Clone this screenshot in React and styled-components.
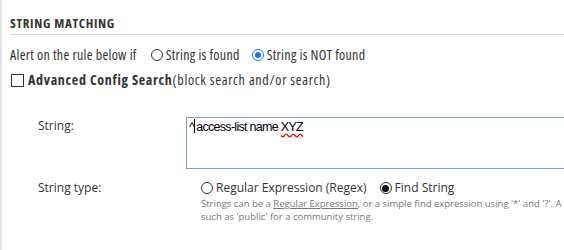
import React from "react";
import styled, { createGlobalStyle } from "styled-components";

const Global = createGlobalStyle`
  html, body {
    margin: 0;
    padding: 0;
    background: #fff;
  }
  body {
    font-family: "Open Sans", sans-serif;
    color: #333;
  }
`;

const Panel = styled.div`
  width: 564px;
  height: 250px;
  box-sizing: border-box;
  border-left: 2px solid #e2e2e2;
  padding: 0 0 0 8px;
  overflow: hidden;
`;

const Heading = styled.h3`
  margin: 0;
  height: 35px;
  box-sizing: border-box;
  padding: 16px 0 0;
  font-size: 13px;
  font-stretch: 75%;
  letter-spacing: 0.7px;
  line-height: 14px;
  font-weight: 700;
  color: #333;
  border-bottom: 1px solid #dcdcdc;
`;

const Row = styled.div`
  display: flex;
  align-items: center;
  height: 18px;
  font-size: ${(p) => (p.$small ? "12px" : "14px")};
  font-stretch: ${(p) => (p.$small ? "100%" : "75%")};
  letter-spacing: ${(p) => (p.$small ? 0 : p.$spacing || 0.3)}px;
  line-height: 18px;
  color: #333;
  margin-top: ${(p) => p.$top || 0}px;
  white-space: nowrap;
`;

const Option = styled.label`
  display: inline-flex;
  align-items: center;
  margin-left: ${(p) => p.$gap || 0}px;
  gap: 3px;
`;

const Radio = styled.span`
  box-sizing: border-box;
  width: 12px;
  height: 12px;
  border-radius: 50%;
  border: 1px solid ${(p) => (p.$blue ? "#1a73e8" : "#333")};
  display: inline-flex;
  align-items: center;
  justify-content: center;
  background: #fff;
  &::after {
    content: "";
    display: ${(p) => (p.$checked ? "block" : "none")};
    width: ${(p) => (p.$blue ? 6 : 7)}px;
    height: ${(p) => (p.$blue ? 6 : 7)}px;
    border-radius: 50%;
    background: ${(p) => (p.$blue ? "#1a73e8" : "#111")};
  }
`;

const Check = styled.span`
  box-sizing: border-box;
  width: 13px;
  height: 13px;
  border: 1px solid #333;
  margin: 0 4px 0 1px;
  background: #fff;
`;

const Strong = styled.span`
  font-weight: 700;
`;

const Field = styled.div`
  display: grid;
  grid-template-columns: 148px 1fr;
  padding-left: 28px;
  margin-top: ${(p) => p.$top || 0}px;
  font-size: 12px;
  color: #333;
`;

const Label = styled.div`
  line-height: 18px;
`;

const TextBox = styled.div`
  box-sizing: border-box;
  height: 52px;
  width: 420px;
  border: 1px solid #7f9db9;
  padding: 1px 2px;
  font-family: "Liberation Sans", Arial, sans-serif;
  font-size: 12.5px;
  letter-spacing: -0.7px;
  line-height: 16px;
  color: #000;
  white-space: nowrap;
`;

const Caret = styled.span`
  display: inline-block;
  width: 1px;
  height: 14px;
  margin-right: 1px;
  background: #000;
  vertical-align: -2px;
`;

const Misspelled = styled.span`
  text-decoration: underline wavy #e00;
  text-underline-offset: 2px;
`;

const Help = styled.div`
  font-size: 9.5px;
  line-height: 13px;
  color: #777;
  white-space: nowrap;
`;

const HelpLink = styled.span`
  text-decoration: underline;
`;

const Indent = styled.div`
  padding-left: 15px;
`;

export default function App() {
  return (
    <>
      <Global />
      <Panel>
        <Heading>STRING MATCHING</Heading>
        <Row $top={11}>
          Alert on the rule below if
          <Option $gap={14}>
            <Radio />
            String is found
          </Option>
          <Option $gap={12}>
            <Radio $checked $blue />
            String is NOT found
          </Option>
        </Row>
        <Row $top={7} $spacing={0.7}>
          <Check />
          <Strong>Advanced Config Search</Strong>(block search and/or search)
        </Row>
        <Field $top={28}>
          <Label>String:</Label>
          <TextBox>
            ^<Caret />access-list name <Misspelled>XYZ</Misspelled>
          </TextBox>
        </Field>
        <Field $top={10}>
          <Label>String type:</Label>
          <Indent>
            <Row $small>
              <Option>
                <Radio />
                Regular Expression (Regex)
              </Option>
              <Option $gap={13}>
                <Radio $checked />
                Find String
              </Option>
            </Row>
            <Help>
              Strings can be a <HelpLink>Regular Expression</HelpLink>, or a simple find
              expression using '*' and '?'. A partial match is allowed,
              <br />
              such as 'public' for a community string.
            </Help>
          </Indent>
        </Field>
      </Panel>
    </>
  );
}
